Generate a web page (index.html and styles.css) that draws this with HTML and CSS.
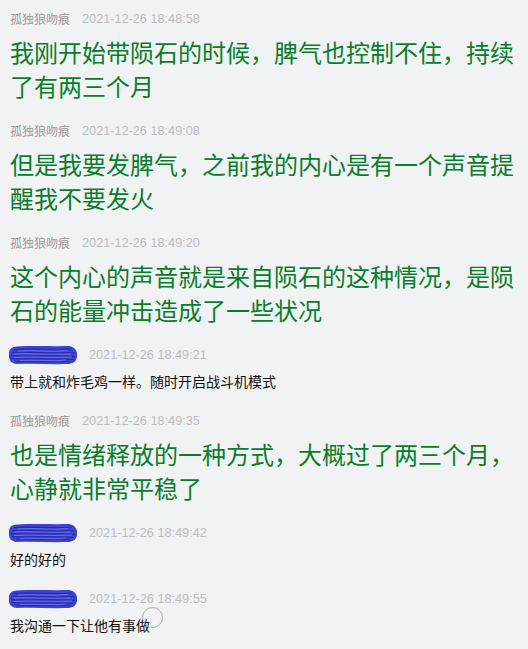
FILE: index.html
```html
<!DOCTYPE html>
<html lang="zh-CN">
<head>
<meta charset="utf-8">
<link rel="stylesheet" href="styles.css">
</head>
<body>
<div class="chat">
  <div class="msg big">
    <div class="head"><span class="name">孤独狼吻痕</span><span class="time">2021-12-26 18:48:58</span></div>
    <div class="text">我刚开始带陨石的时候，脾气也控制不住，持续了有两三个月</div>
  </div>
  <div class="msg big">
    <div class="head"><span class="name">孤独狼吻痕</span><span class="time">2021-12-26 18:49:08</span></div>
    <div class="text">但是我要发脾气，之前我的内心是有一个声音提醒我不要发火</div>
  </div>
  <div class="msg big">
    <div class="head"><span class="name">孤独狼吻痕</span><span class="time">2021-12-26 18:49:20</span></div>
    <div class="text">这个内心的声音就是来自陨石的这种情况，是陨石的能量冲击造成了一些状况</div>
  </div>
  <div class="msg small">
    <div class="head"><svg class="scribble" width="70" height="20" viewBox="0 0 70 20"><path d="M9 1.5 C25 0.5 45 1.5 61 1 C67 2 69.5 6 69 10 C69.5 15 66 19 60 19 C44 19.5 26 18.5 9 19 C3 18.5 0.5 15 1 10 C0.5 5 3 1.5 9 1.5 Z" fill="#3d42d2"/><path d="M6 4.5 C20 3 40 6 64 4 M4 7.5 C22 6.5 44 9 66 7.5 M3 10.5 C20 12 46 9.5 67 11.5 M4 13.5 C24 15 44 12.5 66 14.5 M8 16.5 C26 17.5 42 15.5 62 16.5" stroke="#2729a8" stroke-width="1.1" fill="none"/><path d="M10 6 C26 4.5 44 7.5 60 5.5 M6 9 C20 8 40 10 63 9 M6 12.5 C24 11 44 13.5 64 12 M12 15.5 C30 14.5 46 16.5 58 15" stroke="#777cec" stroke-width="0.8" fill="none"/></svg><span class="time">2021-12-26 18:49:21</span></div>
    <div class="text">带上就和炸毛鸡一样。随时开启战斗机模式</div>
  </div>
  <div class="msg big">
    <div class="head"><span class="name">孤独狼吻痕</span><span class="time">2021-12-26 18:49:35</span></div>
    <div class="text">也是情绪释放的一种方式，大概过了两三个月，心静就非常平稳了</div>
  </div>
  <div class="msg small">
    <div class="head"><svg class="scribble" width="70" height="20" viewBox="0 0 70 20"><path d="M9 1.5 C25 0.5 45 1.5 61 1 C67 2 69.5 6 69 10 C69.5 15 66 19 60 19 C44 19.5 26 18.5 9 19 C3 18.5 0.5 15 1 10 C0.5 5 3 1.5 9 1.5 Z" fill="#3d42d2"/><path d="M6 4.5 C20 3 40 6 64 4 M4 7.5 C22 6.5 44 9 66 7.5 M3 10.5 C20 12 46 9.5 67 11.5 M4 13.5 C24 15 44 12.5 66 14.5 M8 16.5 C26 17.5 42 15.5 62 16.5" stroke="#2729a8" stroke-width="1.1" fill="none"/><path d="M10 6 C26 4.5 44 7.5 60 5.5 M6 9 C20 8 40 10 63 9 M6 12.5 C24 11 44 13.5 64 12 M12 15.5 C30 14.5 46 16.5 58 15" stroke="#777cec" stroke-width="0.8" fill="none"/></svg><span class="time">2021-12-26 18:49:42</span></div>
    <div class="text">好的好的</div>
  </div>
  <div class="msg small last">
    <div class="head"><svg class="scribble" width="70" height="20" viewBox="0 0 70 20"><path d="M9 1.5 C25 0.5 45 1.5 61 1 C67 2 69.5 6 69 10 C69.5 15 66 19 60 19 C44 19.5 26 18.5 9 19 C3 18.5 0.5 15 1 10 C0.5 5 3 1.5 9 1.5 Z" fill="#3d42d2"/><path d="M6 4.5 C20 3 40 6 64 4 M4 7.5 C22 6.5 44 9 66 7.5 M3 10.5 C20 12 46 9.5 67 11.5 M4 13.5 C24 15 44 12.5 66 14.5 M8 16.5 C26 17.5 42 15.5 62 16.5" stroke="#2729a8" stroke-width="1.1" fill="none"/><path d="M10 6 C26 4.5 44 7.5 60 5.5 M6 9 C20 8 40 10 63 9 M6 12.5 C24 11 44 13.5 64 12 M12 15.5 C30 14.5 46 16.5 58 15" stroke="#777cec" stroke-width="0.8" fill="none"/></svg><span class="time">2021-12-26 18:49:55</span></div>
    <div class="text">我沟通一下让他有事做</div>
    <div class="cursor"></div>
  </div>
</div>
</body>
</html>
```

FILE: styles.css
```css
html, body {
  margin: 0;
  padding: 0;
  background: #f1f2f4;
}
body {
  width: 528px;
  height: 649px;
  overflow: hidden;
}
.chat {
  padding: 9px 10px 0 10px;
  font-family: "Noto Sans CJK SC", "Noto Sans", sans-serif;
}
.msg {
  position: relative;
  display: flex;
  flex-direction: column;
  gap: 6px;
}
.msg.big {
  margin-bottom: 18px;
}
.msg.small {
  margin-bottom: 20px;
}
.head {
  display: flex;
  align-items: center;
  height: 20px;
}
.name {
  font-size: 12px;
  color: #9a9a9a;
  margin-right: 12px;
  line-height: 20px;
}
.scribble {
  display: block;
  margin-left: -2px;
  margin-right: 11px;
}
.time {
  font-family: "Liberation Sans", Arial, sans-serif;
  font-size: 12.7px;
  color: #bdbdbd;
  line-height: 20px;
}
.big .text {
  font-size: 24px;
  line-height: 34px;
  color: #0a7d2c;
}
.small .text {
  font-size: 14px;
  line-height: 20px;
  color: #111;
}
.cursor {
  position: absolute;
  left: 132px;
  top: 18px;
  width: 19px;
  height: 19px;
  border: 1.5px solid #a9a9b2;
  border-radius: 50%;
}
```
